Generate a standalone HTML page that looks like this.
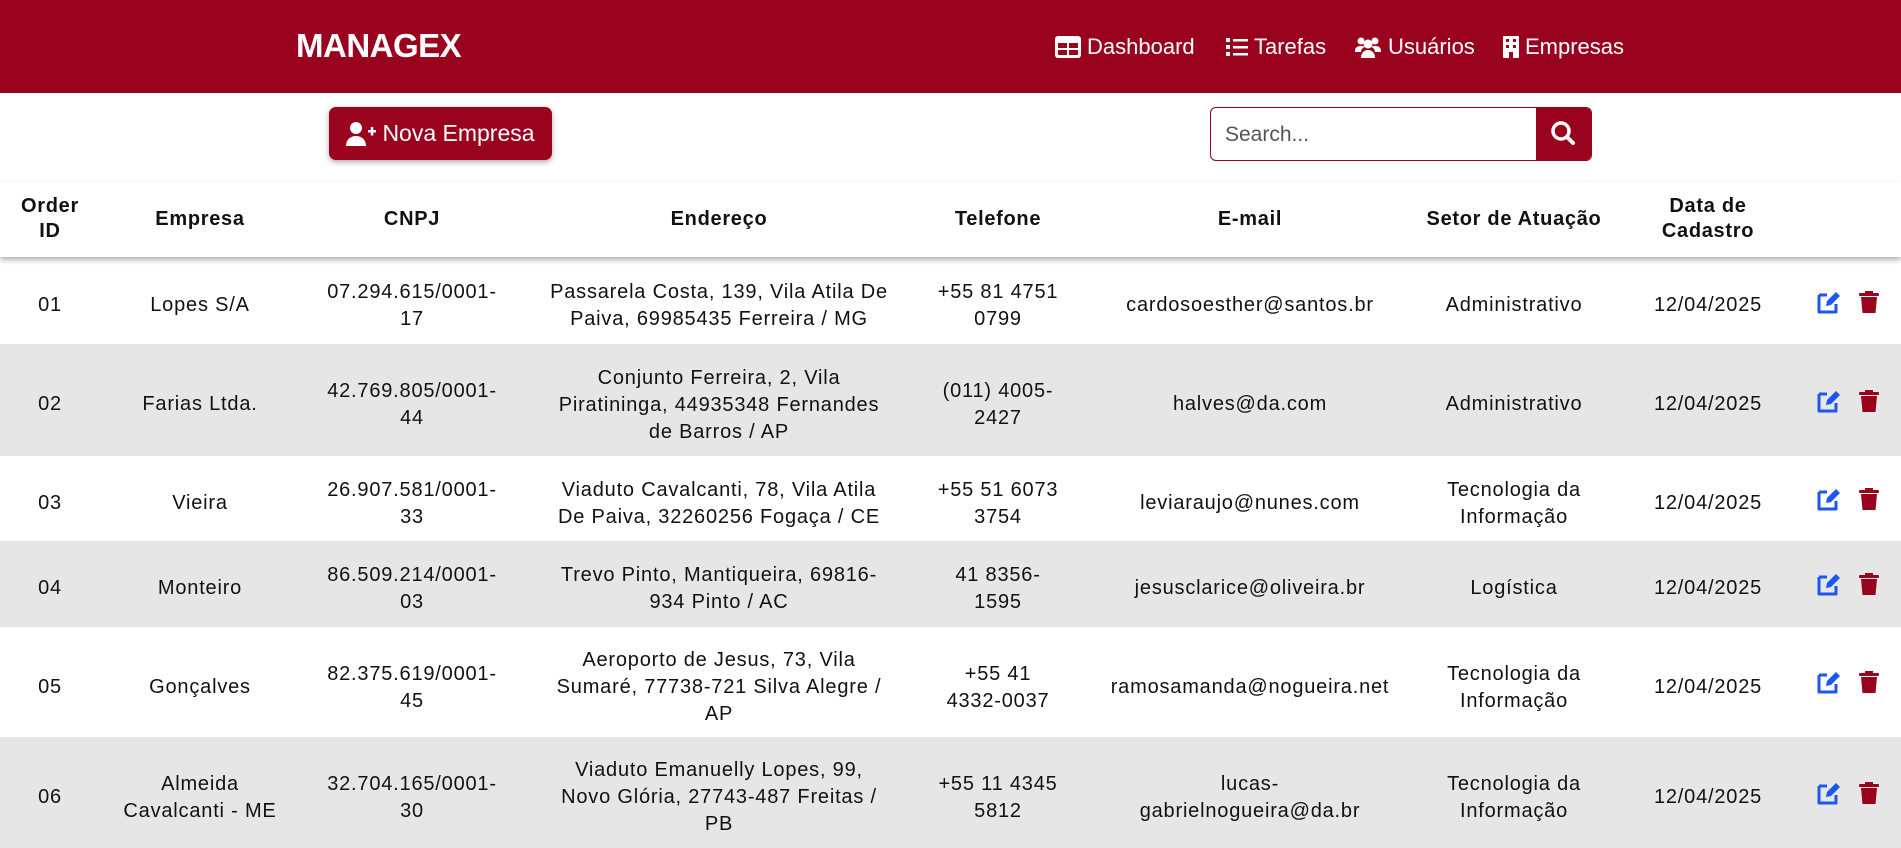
<!DOCTYPE html>
<html><head><meta charset="utf-8"><style>
*{margin:0;padding:0;box-sizing:border-box}
body{width:1901px;height:848px;overflow:hidden;background:#fff;font-family:"Liberation Sans",sans-serif;color:#111}
.hdr{position:absolute;left:0;top:0;width:1901px;height:93px;background:#9a031e;color:#fff}
.logo{position:absolute;left:296px;top:27px;font-size:33px;font-weight:bold;letter-spacing:-0.5px}
.nav{position:absolute;top:34px;font-size:22px;display:flex;align-items:center;gap:6px}
.btn{position:absolute;left:329px;top:107px;width:223px;height:53px;background:#9a031e;border-radius:7px;color:#fff;font-size:23px;display:flex;align-items:center;justify-content:center;gap:6px;box-shadow:0 2px 6px rgba(0,0,0,.35)}
.search{position:absolute;left:1210px;top:107px;width:382px;height:54px;border:1.5px solid #9a031e;border-radius:6px;overflow:hidden}
.search span{position:absolute;left:14px;top:15px;font-size:21px;color:#555}
.search .sb{position:absolute;right:0;top:0;width:55px;height:100%;background:#9a031e}
.th{position:absolute;top:182px;left:0;width:1901px;height:75px;box-shadow:0 3px 5px rgba(0,0,0,.3);background:#fff;z-index:2}
.c{position:absolute;text-align:center;white-space:nowrap;transform:translateX(-50%);line-height:27px}
.th .c{font-weight:bold;font-size:20px;line-height:25px;letter-spacing:.7px}
.row{position:absolute;left:0;width:1901px;font-size:20px;letter-spacing:.8px}
.row .c{transform:translate(-50%,5px)}
.g{background:#e6e6e6}
.ic{position:absolute}
</style></head><body>
<div class="hdr">
<div class="logo">MANAGEX</div>
<div class="nav" style="left:1055px"><svg width="26" height="22" viewBox="0 0 26 22"><rect x="0" y="0" width="26" height="22" rx="3" fill="#fff"/><rect x="3" y="7" width="9" height="5" fill="#9a031e"/><rect x="14" y="7" width="9" height="5" fill="#9a031e"/><rect x="3" y="14" width="9" height="5" fill="#9a031e"/><rect x="14" y="14" width="9" height="5" fill="#9a031e"/></svg>Dashboard</div>
<div class="nav" style="left:1226px"><svg width="22" height="20" viewBox="0 0 22 20"><g fill="#fff"><rect x="0" y="1" width="4" height="4"/><rect x="0" y="8" width="4" height="4"/><rect x="0" y="15" width="4" height="4"/><rect x="7" y="2" width="15" height="2.5"/><rect x="7" y="9" width="15" height="2.5"/><rect x="7" y="16" width="15" height="2.5"/></g></svg>Tarefas</div>
<div class="nav" style="left:1354px"><svg width="28" height="22" viewBox="0 0 28 22"><g fill="#fff"><circle cx="7" cy="5" r="3.5"/><circle cx="21" cy="5" r="3.5"/><circle cx="14" cy="8" r="4.5"/><path d="M1 15c0-4 3-5 6-5s4 1 4 1c-3 1-4 3-4 5H1z"/><path d="M27 15c0-4-3-5-6-5s-4 1-4 1c3 1 4 3 4 5h6z"/><path d="M7 22c0-5 3-8 7-8s7 3 7 8z"/></g></svg>Usuários</div>
<div class="nav" style="left:1503px"><svg width="16" height="22" viewBox="0 0 16 22"><rect width="16" height="22" rx="1" fill="#fff"/><g fill="#9a031e"><rect x="3" y="3" width="3" height="3"/><rect x="10" y="3" width="3" height="3"/><rect x="3" y="9" width="3" height="3"/><rect x="10" y="9" width="3" height="3"/><rect x="6" y="16" width="4" height="6"/></g></svg>Empresas</div>
</div>
<div class="btn"><svg width="30" height="24" viewBox="0 0 30 24"><g fill="#fff"><circle cx="10" cy="6" r="6"/><path d="M0 24c0-6 4-10 10-10s10 4 10 10z"/><rect x="22" y="8" width="8" height="2.5"/><rect x="24.8" y="5" width="2.5" height="8.5"/></g></svg>Nova Empresa</div>
<div class="search"><span>Search...</span><div class="sb"><svg width="55" height="52" viewBox="0 0 55 52"><circle cx="25" cy="23" r="8" fill="none" stroke="#fff" stroke-width="3.5"/><line x1="31" y1="29" x2="37" y2="35" stroke="#fff" stroke-width="4" stroke-linecap="round"/></svg></div></div>
<div class="th">
<div class="c" style="left:50px;top:12px">Order<br>ID</div>
<div class="c" style="left:200px;top:25px">Empresa</div>
<div class="c" style="left:412px;top:25px">CNPJ</div>
<div class="c" style="left:719px;top:25px">Endereço</div>
<div class="c" style="left:998px;top:25px">Telefone</div>
<div class="c" style="left:1250px;top:25px">E-mail</div>
<div class="c" style="left:1514px;top:25px">Setor de Atuação</div>
<div class="c" style="left:1708px;top:12px">Data de<br>Cadastro</div>
</div>
<div class="row" style="top:257px;height:87px">
<div class="c" style="left:50px;top:30px">01</div><div class="c" style="left:200px;top:30px">Lopes S/A</div>
<div class="c" style="left:412px;top:17px">07.294.615/0001-<br>17</div><div class="c" style="left:719px;top:17px">Passarela Costa, 139, Vila Atila De<br>Paiva, 69985435 Ferreira / MG</div>
<div class="c" style="left:998px;top:17px">+55 81 4751<br>0799</div><div class="c" style="left:1250px;top:30px">cardosoesther@santos.br</div>
<div class="c" style="left:1514px;top:30px">Administrativo</div><div class="c" style="left:1708px;top:30px">12/04/2025</div>
</div>
<div class="row g" style="top:344px;height:112px">
<div class="c" style="left:50px;top:42px">02</div><div class="c" style="left:200px;top:42px">Farias Ltda.</div>
<div class="c" style="left:412px;top:29px">42.769.805/0001-<br>44</div><div class="c" style="left:719px;top:16px">Conjunto Ferreira, 2, Vila<br>Piratininga, 44935348 Fernandes<br>de Barros / AP</div>
<div class="c" style="left:998px;top:29px">(011) 4005-<br>2427</div><div class="c" style="left:1250px;top:42px">halves@da.com</div>
<div class="c" style="left:1514px;top:42px">Administrativo</div><div class="c" style="left:1708px;top:42px">12/04/2025</div>
</div>
<div class="row" style="top:456px;height:85px">
<div class="c" style="left:50px;top:29px">03</div><div class="c" style="left:200px;top:29px">Vieira</div>
<div class="c" style="left:412px;top:16px">26.907.581/0001-<br>33</div><div class="c" style="left:719px;top:16px">Viaduto Cavalcanti, 78, Vila Atila<br>De Paiva, 32260256 Fogaça / CE</div>
<div class="c" style="left:998px;top:16px">+55 51 6073<br>3754</div><div class="c" style="left:1250px;top:29px">leviaraujo@nunes.com</div>
<div class="c" style="left:1514px;top:16px">Tecnologia da<br>Informação</div><div class="c" style="left:1708px;top:29px">12/04/2025</div>
</div>
<div class="row g" style="top:541px;height:86px">
<div class="c" style="left:50px;top:29px">04</div><div class="c" style="left:200px;top:29px">Monteiro</div>
<div class="c" style="left:412px;top:16px">86.509.214/0001-<br>03</div><div class="c" style="left:719px;top:16px">Trevo Pinto, Mantiqueira, 69816-<br>934 Pinto / AC</div>
<div class="c" style="left:998px;top:16px">41 8356-<br>1595</div><div class="c" style="left:1250px;top:29px">jesusclarice@oliveira.br</div>
<div class="c" style="left:1514px;top:29px">Logística</div><div class="c" style="left:1708px;top:29px">12/04/2025</div>
</div>
<div class="row" style="top:627px;height:110px">
<div class="c" style="left:50px;top:42px">05</div><div class="c" style="left:200px;top:42px">Gonçalves</div>
<div class="c" style="left:412px;top:29px">82.375.619/0001-<br>45</div><div class="c" style="left:719px;top:15px">Aeroporto de Jesus, 73, Vila<br>Sumaré, 77738-721 Silva Alegre /<br>AP</div>
<div class="c" style="left:998px;top:29px">+55 41<br>4332-0037</div><div class="c" style="left:1250px;top:42px">ramosamanda@nogueira.net</div>
<div class="c" style="left:1514px;top:29px">Tecnologia da<br>Informação</div><div class="c" style="left:1708px;top:42px">12/04/2025</div>
</div>
<div class="row g" style="top:737px;height:111px">
<div class="c" style="left:50px;top:42px">06</div><div class="c" style="left:200px;top:29px">Almeida<br>Cavalcanti - ME</div>
<div class="c" style="left:412px;top:29px">32.704.165/0001-<br>30</div><div class="c" style="left:719px;top:15px">Viaduto Emanuelly Lopes, 99,<br>Novo Glória, 27743-487 Freitas /<br>PB</div>
<div class="c" style="left:998px;top:29px">+55 11 4345<br>5812</div><div class="c" style="left:1250px;top:29px">lucas-<br>gabrielnogueira@da.br</div>
<div class="c" style="left:1514px;top:29px">Tecnologia da<br>Informação</div><div class="c" style="left:1708px;top:42px">12/04/2025</div>
</div>
<svg class="ic" width="1901" height="848" style="left:0;top:0;z-index:3" viewBox="0 0 1901 848">
<defs>
<g id="ed"><path d="M2 4h8M2 4v17h17v-8" fill="none" stroke="#1a56f0" stroke-width="3" stroke-linejoin="round"/><path d="M9 15l1-5 9-9 4 4-9 9z" fill="#1a56f0"/></g>
<g id="tr" fill="#9a031e"><rect x="0" y="2" width="20" height="3" rx="1"/><rect x="6" y="0" width="8" height="3"/><path d="M2 6h16l-1.5 16h-13z"/></g>
</defs>
<use href="#ed" x="1817" y="291"/><use href="#tr" x="1859" y="291"/>
<use href="#ed" x="1817" y="390"/><use href="#tr" x="1859" y="390"/>
<use href="#ed" x="1817" y="488"/><use href="#tr" x="1859" y="488"/>
<use href="#ed" x="1817" y="573"/><use href="#tr" x="1859" y="573"/>
<use href="#ed" x="1817" y="671"/><use href="#tr" x="1859" y="671"/>
<use href="#ed" x="1817" y="782"/><use href="#tr" x="1859" y="782"/>
</svg>
</body></html>
